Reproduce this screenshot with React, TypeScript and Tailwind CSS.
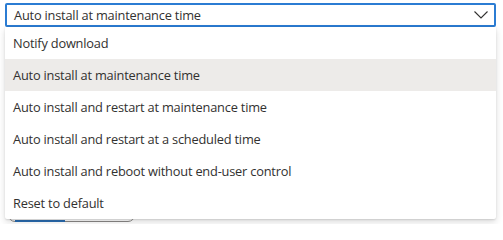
import React from "react";

const options = [
  "Notify download",
  "Auto install at maintenance time",
  "Auto install and restart at maintenance time",
  "Auto install and restart at a scheduled time",
  "Auto install and reboot without end-user control",
  "Reset to default",
];

export default function App() {
  return (
    <div
      className="relative w-[503px] h-[224px] bg-white overflow-hidden flex flex-col text-[#323130] text-[12.8px] tracking-[-0.2px]"
      style={{ fontFamily: '"Open Sans", "Noto Sans", sans-serif' }}
    >
      <div className="mt-[3px] ml-[5px] w-[491px] h-[24px] border-2 border-[#2b7cd3] rounded-[2px] flex items-center pl-[7px] pr-[5px]">
        <span className="leading-none flex-1 pt-[1px]">Auto install at maintenance time</span>
        <svg width="14" height="8" viewBox="0 0 14 8" className="mr-[1px]">
          <path d="M0.5 0.5 L7 7 L13.5 0.5" fill="none" stroke="#323130" strokeWidth="1.1" />
        </svg>
      </div>
      <div className="mt-auto ml-[8px] mb-[2px] w-[127px] h-[20px] rounded-[7px] border border-[#8a8886] flex items-end pl-[6px]">
        <div className="w-[50px] h-[2px] bg-[#2b6cb0] -mb-[1px]" />
      </div>
      <div className="absolute left-[5px] top-[27px] w-[491px] bg-white rounded-b-[2px] shadow-[0_3px_7px_rgba(0,0,0,0.14),0_0.6px_1.8px_rgba(0,0,0,0.11)]">
        {options.map((o, i) => (
          <div
            key={o}
            className={`h-[32px] flex items-center pl-[8px] pt-[1px] ${i === 1 ? "bg-[#edebe9]" : ""}`}
          >
            {o}
          </div>
        ))}
      </div>
    </div>
  );
}
